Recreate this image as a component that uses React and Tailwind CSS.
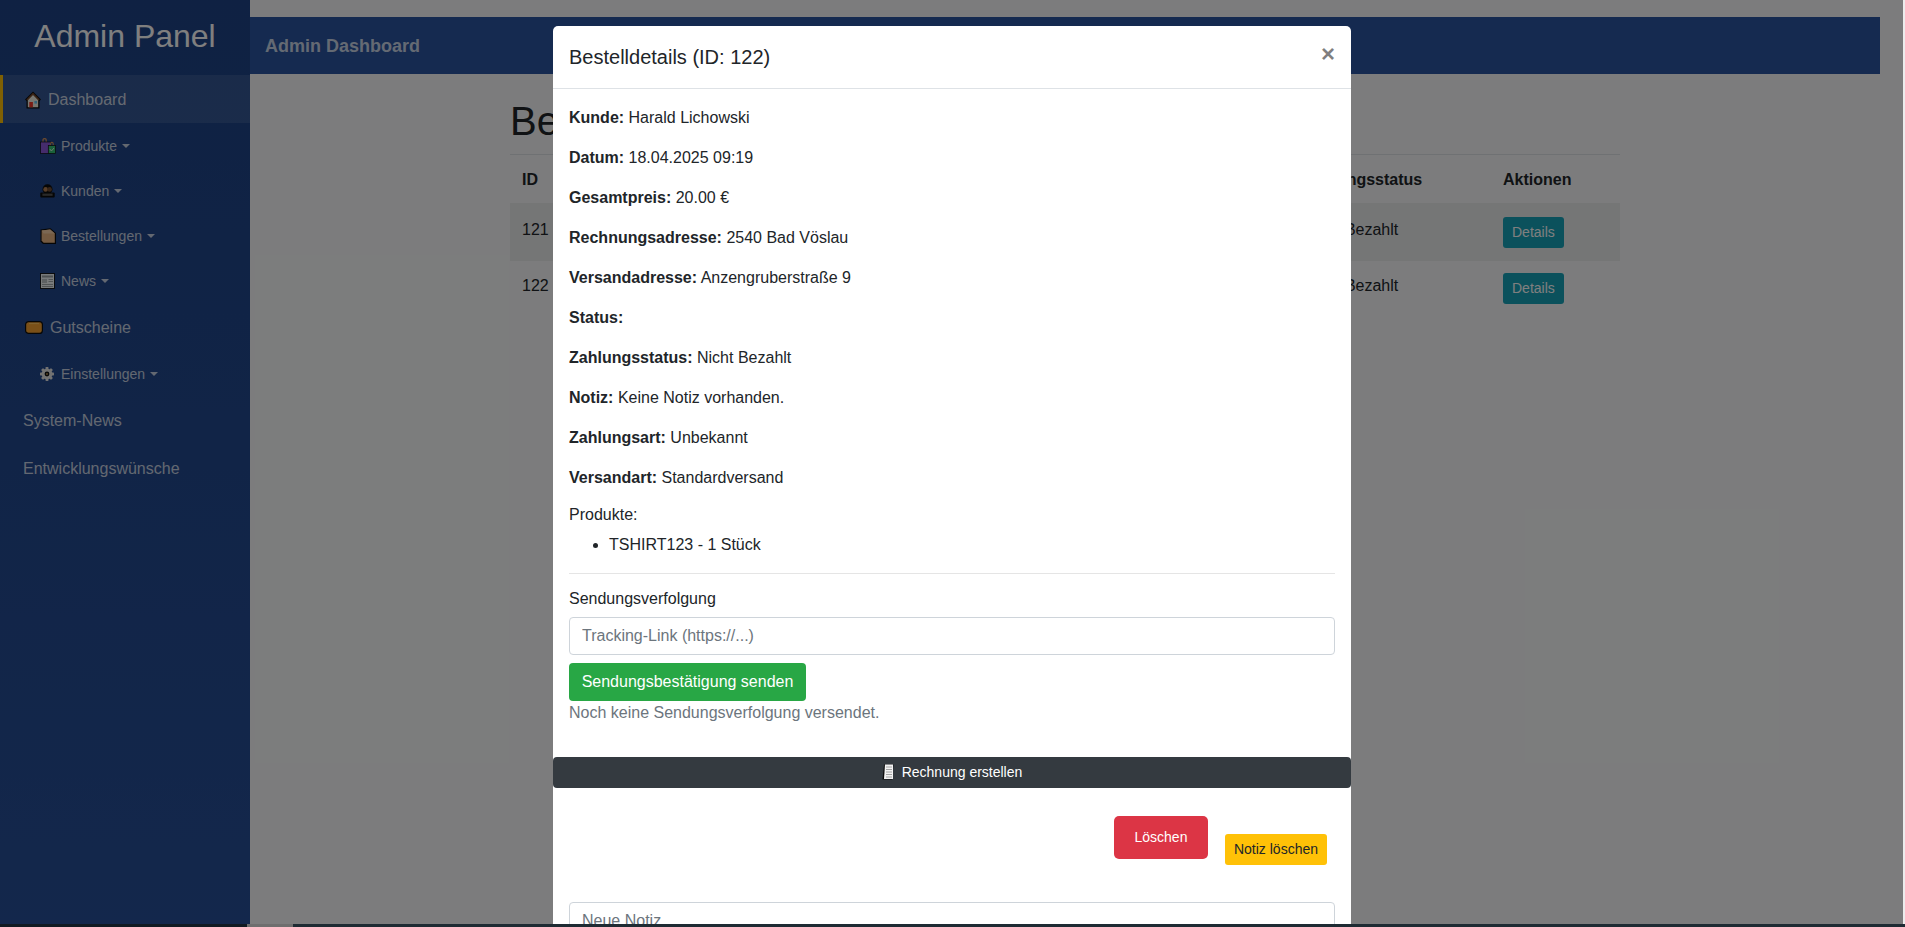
import React from "react";

const House = () => (
  <svg width="16" height="18" viewBox="0 0 16 18" className="shrink-0">
    <path d="M8 .5 L16 8.5 L14.5 10 V17.5 H1.5 V10 L0 8.5 Z" fill="#0c0c0c" />
    <path d="M2.8 9 L8 3.8 L13.2 9 V16.3 H2.8 Z" fill="#f0eee2" />
    <path d="M8 1.8 L14.6 8.4 L13.6 9.4 L8 3.8 L2.4 9.4 L1.4 8.4 Z" fill="#7c4a2c" />
    <rect x="4.3" y="11" width="3.6" height="5.3" fill="#f0382b" />
    <rect x="9.4" y="10" width="2.6" height="2.6" fill="#67c4f0" />
  </svg>
);
const Bags = () => (
  <svg width="16" height="16" viewBox="0 0 16 16" className="shrink-0">
    <path d="M3 4 V2.2 Q3 .6 4.6 .6 Q6.2 .6 6.2 2.2 V4" fill="none" stroke="#d09060" strokeWidth="1.3" />
    <rect x="0.5" y="4" width="10" height="11.5" fill="#8a58d8" stroke="#0c0c0c" strokeWidth="0.7" />
    <path d="M10.6 7.5 V5.8 Q10.6 4.4 11.9 4.4 Q13.2 4.4 13.2 5.8 V7.5" fill="none" stroke="#d09060" strokeWidth="1.1" />
    <rect x="8.3" y="7.6" width="7.2" height="7.9" fill="#35c274" stroke="#0c0c0c" strokeWidth="0.7" />
    <path d="M9.8 11 L11.4 13 L14 10" fill="none" stroke="#e4f9ea" strokeWidth="0.9" />
  </svg>
);
const People = () => (
  <svg width="15" height="14" viewBox="0 0 15 14" className="shrink-0">
    <rect x="0.3" y="8.6" width="14.4" height="5" rx="1" fill="#0c0c0c" />
    <circle cx="7.5" cy="5.3" r="5" fill="#0c0c0c" />
    <circle cx="5.6" cy="5.4" r="2.3" fill="#b07c50" />
    <circle cx="9.6" cy="5.4" r="2.3" fill="#6e4a30" />
    <rect x="2.4" y="9.6" width="10.2" height="2.2" fill="#555" />
  </svg>
);
const Box = () => (
  <svg width="16" height="16" viewBox="0 0 16 16" className="shrink-0">
    <path d="M.5 1.5 L10.5 .3 L16 5 V16 H3 L.5 13.5 Z" fill="#0c0c0c" />
    <path d="M1.6 2.6 L10.2 1.5 L14.8 5.4 V14.8 H3.6 L1.6 12.8 Z" fill="#e8b483" />
    <path d="M1.6 2.6 L3.6 5.4 H14.8 L10.2 1.5 Z" fill="#f6cfa6" />
  </svg>
);
const Paper = () => (
  <svg width="15" height="16" viewBox="0 0 15 16" className="shrink-0">
    <rect x="0.5" y="0.5" width="14" height="15" fill="#f0f4f4" stroke="#0c0c0c" strokeWidth="0.9" />
    <rect x="2" y="2.5" width="11" height="2" fill="#9aa0a3" />
    <rect x="2" y="6" width="5" height="4" fill="#bcc2c4" />
    <path d="M8.5 6.5 H13 M8.5 8.5 H13 M2 11.5 H13 M2 13.5 H13" stroke="#9aa0a3" strokeWidth="0.9" />
  </svg>
);
const Ticket = () => (
  <svg width="18" height="13" viewBox="0 0 18 13" className="shrink-0">
    <rect x="0.6" y="0.6" width="16.8" height="11.8" rx="3" fill="#f5a030" stroke="#0c0c0c" strokeWidth="1.2" />
    <path d="M4 2.6 H14" stroke="#ffc864" strokeWidth="1" />
  </svg>
);
const Gear = () => (
  <svg width="14" height="14" viewBox="0 0 14 14" className="shrink-0">
    <g fill="#e4e4e4">
      <circle cx="7" cy="7" r="5.4" />
      <rect x="5.6" y="0" width="2.8" height="14" rx="0.6" />
      <rect x="0" y="5.6" width="14" height="2.8" rx="0.6" />
      <rect x="5.6" y="0" width="2.8" height="14" rx="0.6" transform="rotate(45 7 7)" />
      <rect x="5.6" y="0" width="2.8" height="14" rx="0.6" transform="rotate(-45 7 7)" />
    </g>
    <circle cx="7" cy="7" r="2.4" fill="#111" />
    <circle cx="7" cy="7" r="1" fill="#a88448" />
  </svg>
);
const Receipt = () => (
  <svg width="12" height="16" viewBox="0 0 12 16" className="shrink-0">
    <path d="M2 .5 H11.5 L10 15.5 H.5 Z" fill="#0c0c0c" />
    <path d="M3 .5 H11 V15 H2 Z" fill="#f2f2f2" />
    <path d="M4 3 H10 M4 5.5 H10 M4 8 H10 M4 10.5 H10 M4 13 H10" stroke="#9a9a9a" strokeWidth="0.9" />
  </svg>
);

const Caret = () => (
  <span className="ml-[-1px] inline-block h-0 w-0 border-x-[4px] border-t-[4px] border-x-transparent border-t-white/75" />
);

const SubItem = ({ icon, label }) => (
  <div className="flex h-[45px] items-center gap-[6px] pl-[40px] text-sm text-white/75">
    <span className="flex w-[15px] shrink-0">{icon}</span>
    <span>{label}</span>
    <Caret />
  </div>
);

const Field = ({ label, value }) => (
  <p className="mb-4 leading-6">
    <strong className="font-bold">{label}</strong>
    {value ? ` ${value}` : ""}
  </p>
);

export default function App() {
  return (
    <div className="relative flex h-[927px] w-[1905px] overflow-hidden bg-[#f8f9fa] font-['Liberation_Sans',Arial,sans-serif] text-base text-[#212529]">
      <aside className="flex h-full w-[250px] shrink-0 flex-col bg-gradient-to-b from-[#1e4386] to-[#274f98]">
        <div className="flex h-[75px] items-center justify-center pb-[4px] text-[32px] text-white">Admin Panel</div>
        <div className="flex h-[48px] items-center gap-[7px] border-l-[3px] border-[#ffc107] bg-white/10 pt-[1px] pl-[22px] text-white/75">
          <House />
          <span>Dashboard</span>
        </div>
        <SubItem icon={<Bags />} label="Produkte" />
        <SubItem icon={<People />} label="Kunden" />
        <SubItem icon={<Box />} label="Bestellungen" />
        <SubItem icon={<Paper />} label="News" />
        <div className="flex h-[48px] items-center gap-[7px] pt-[1px] pl-[25px] text-white/75">
          <Ticket />
          <span>Gutscheine</span>
        </div>
        <SubItem icon={<Gear />} label="Einstellungen" />
        <div className="flex h-[48px] items-center pt-[1px] pl-[23px] text-white/75">System-News</div>
        <div className="flex h-[48px] items-center pt-[1px] pl-[23px] text-white/75">Entwicklungswünsche</div>
      </aside>

      <main className="min-w-0 flex-1 pt-[17px]">
        <div className="mr-[23px] flex h-[57px] items-center bg-[#2a54a0] pl-[15px] text-lg font-bold text-white/75">
          Admin Dashboard
        </div>
        <div className="ml-[260px] w-[1110px]">
          <h1 className="mt-[23px] text-[40px] leading-[48px] font-normal">Bestellungen</h1>
          <table className="mt-[9px] w-full table-fixed border-collapse">
            <colgroup>
              <col className="w-[782px]" />
              <col className="w-[199px]" />
              <col />
            </colgroup>
            <thead>
              <tr className="h-[48px] border-t border-[#dee2e6] text-left font-bold">
                <th className="px-3 pt-[2px]">ID</th>
                <th className="px-3 pt-[2px]">Zahlungsstatus</th>
                <th className="px-3 pt-[2px]">Aktionen</th>
              </tr>
            </thead>
            <tbody>
              <tr className="h-[58px] bg-black/5">
                <td className="px-3 pt-[15px] align-top">121</td>
                <td className="px-3 pt-[15px] align-top">Nicht Bezahlt</td>
                <td className="px-3 pt-[14px] align-top">
                  <button className="block h-[31px] rounded-[3px] bg-[#17a2b8] px-[9px] text-sm text-white">Details</button>
                </td>
              </tr>
              <tr className="h-[56px]">
                <td className="px-3 pt-[13px] align-top">122</td>
                <td className="px-3 pt-[13px] align-top">Nicht Bezahlt</td>
                <td className="px-3 pt-3 align-top">
                  <button className="block h-[31px] rounded-[3px] bg-[#17a2b8] px-[9px] text-sm text-white">Details</button>
                </td>
              </tr>
            </tbody>
          </table>
        </div>
      </main>

      <div className="h-full w-[2px] shrink-0 bg-[#ececec]" />

      <div className="absolute inset-y-0 right-[2px] left-0 bg-black/50" />

      <div className="absolute top-[26px] left-[553px] w-[798px] rounded-t-[5px] bg-white">
        <div className="flex h-[63px] items-start justify-between border-b border-[#dee2e6] px-4 pt-4">
          <h5 className="text-xl leading-[30px] font-normal">Bestelldetails (ID: 122)</h5>
          <span className="mt-[-6px] text-2xl leading-9 font-bold text-black/50">×</span>
        </div>
        <div className="px-4 pt-[17px]">
          <Field label="Kunde:" value="Harald Lichowski" />
          <Field label="Datum:" value="18.04.2025 09:19" />
          <Field label="Gesamtpreis:" value="20.00 €" />
          <Field label="Rechnungsadresse:" value="2540 Bad Vöslau" />
          <Field label="Versandadresse:" value="Anzengruberstraße 9" />
          <Field label="Status:" />
          <Field label="Zahlungsstatus:" value="Nicht Bezahlt" />
          <Field label="Notiz:" value="Keine Notiz vorhanden." />
          <Field label="Zahlungsart:" value="Unbekannt" />
          <Field label="Versandart:" value="Standardversand" />
          <p className="mt-[-3px] mb-[6px] leading-6">Produkte:</p>
          <ul className="list-disc pl-10 leading-6">
            <li>TSHIRT123 - 1 Stück</li>
          </ul>
          <hr className="mt-4 border-[#e5e5e5]" />
          <p className="mt-[13px] leading-6">Sendungsverfolgung</p>
          <input
            readOnly
            placeholder="Tracking-Link (https://...)"
            className="mt-[6px] block h-[38px] w-full rounded-[4px] border border-[#ced4da] px-3 text-[#495057] placeholder:text-[#6c757d]"
          />
          <button className="mt-2 block h-[38px] w-[237px] rounded-[4px] bg-[#28a745] text-white">Sendungsbestätigung senden</button>
          <p className="leading-6 text-[#6c757d]">Noch keine Sendungsverfolgung versendet.</p>
        </div>
        <button className="mt-8 flex h-[31px] w-full items-center justify-center gap-2 rounded-[4px] bg-[#343a40] pb-[1px] text-sm text-white">
          <Receipt />
          <span>Rechnung erstellen</span>
        </button>
        <div className="mt-7 flex items-start justify-end gap-[17px] pr-[24px]">
          <button className="h-[43px] w-[94px] rounded-[5px] bg-[#dc3545] pb-[2px] text-sm text-white">Löschen</button>
          <button className="mt-[18px] h-[31px] rounded-[3px] bg-[#ffc107] px-[9px] pb-[1px] text-sm text-[#212529]">Notiz löschen</button>
        </div>
        <div className="mt-[37px] px-4 pb-10">
          <input
            readOnly
            placeholder="Neue Notiz"
            className="block h-[38px] w-full rounded-[4px] border border-[#ced4da] px-3 placeholder:text-[#6c757d]"
          />
        </div>
      </div>

      <div className="absolute inset-x-0 bottom-0 flex h-[3px]">
        <div className="w-[247px] bg-[#111a22]" />
        <div className="w-[46px] bg-[#6e6e6e]" />
        <div className="flex-1 bg-[#1e2b33]" />
      </div>
    </div>
  );
}
